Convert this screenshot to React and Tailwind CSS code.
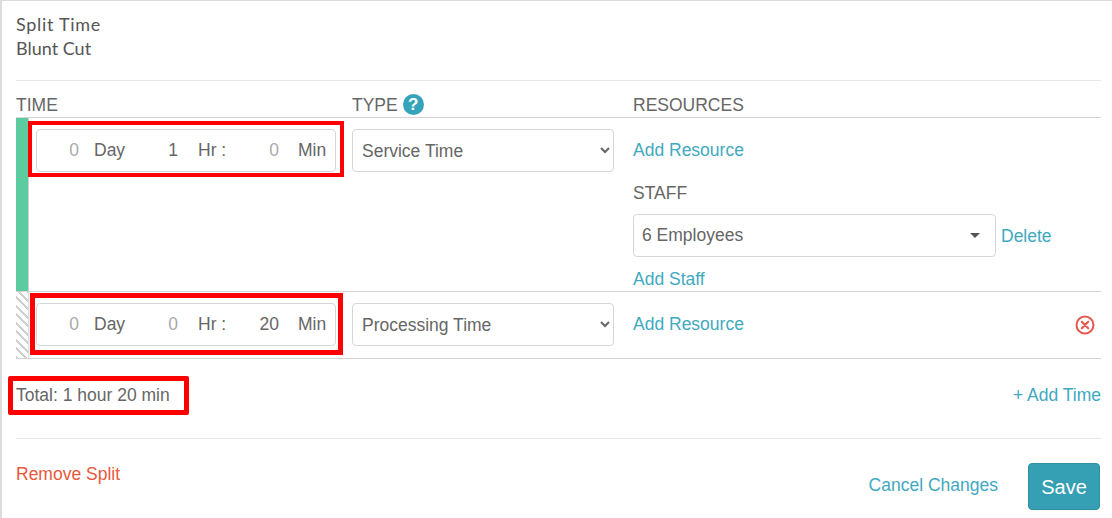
import React from 'react';

const TimeBox = ({ day, hr, min }) => (
  <div className="flex h-[43px] w-[300px] items-center rounded-[4px] border border-[#d6d6d6] bg-white text-[17.5px] text-[#666]">
    <span className="w-[42px] text-right text-[#aaa]">{day}</span>
    <span className="ml-[15px] w-[31px]">Day</span>
    <span className={`w-[53px] text-right ${hr === '0' ? 'text-[#aaa]' : ''}`}>{hr}</span>
    <span className="ml-[20px] w-[27px] whitespace-nowrap">Hr :</span>
    <span className={`w-[54px] text-right ${min === '0' ? 'text-[#aaa]' : ''}`}>{min}</span>
    <span className="ml-[19px]">Min</span>
  </div>
);

const TypeSelect = ({ value }) => (
  <select
    defaultValue={value}
    className="h-[43px] w-[262px] rounded-[4px] border border-[#d6d6d6] bg-white pl-[5px] pr-[4px] text-[17.5px] text-[#666]"
  >
    <option>Service Time</option>
    <option>Processing Time</option>
  </select>
);

const Link = ({ children, className = '' }) => (
  <a className={`text-[17.5px] text-[#3fa9bf] ${className}`}>{children}</a>
);

export default function App() {
  return (
    <div className="h-[518px] w-[1112px] overflow-hidden border-l-2 border-t border-[#dcdcdc] bg-white pl-[14px] pr-[11px] font-['Liberation_Sans',sans-serif] text-[17.5px] text-[#666]">
      {/* Heading */}
      <div className="h-[80px] border-b border-[#e6e6e6] pt-[11px] font-['Lato',sans-serif] text-[18px] leading-[24px] text-[#555]">
        <div className="tracking-[0.7px]">Split Time</div>
        <div>Blunt Cut</div>
      </div>

      {/* Column titles */}
      <div className="flex h-[37px] items-end border-b border-[#d4d4d4] pb-[2px] leading-[20px]">
        <div className="w-[336px]">TIME</div>
        <div className="flex w-[281px] items-center gap-[5px]">
          TYPE
          <span className="flex h-[21px] w-[21px] items-center justify-center rounded-full bg-[#35a3ba] text-[17px] font-bold text-white">?</span>
        </div>
        <div>RESOURCES</div>
      </div>

      {/* Service row */}
      <div className="flex h-[174px] border-b border-[#d4d4d4]">
        <div className="w-[13px] border-r border-[#cfcfcf] bg-[#5ccb9f]" />
        <div className="ml-[-1px] mt-[3px] h-[56px] w-[316px] border-4 border-[#f00] p-[4px] pb-[1px]">
          <TimeBox day="0" hr="1" min="0" />
        </div>
        <div className="ml-[8px] mt-[11px]">
          <TypeSelect value="Service Time" />
        </div>
        <div className="ml-[19px] flex flex-col">
          <Link className="mt-[22px] leading-[20px]">Add Resource</Link>
          <div className="mt-[23px] leading-[20px]">STAFF</div>
          <div className="mt-[11px] flex items-center">
            <div className="flex h-[43px] w-[363px] items-center justify-between rounded-[4px] border border-[#d6d6d6] pl-[8px] pr-[15px]">
              6 Employees
              <span className="h-0 w-0 border-x-[5px] border-t-[5px] border-x-transparent border-t-[#555]" />
            </div>
            <Link className="ml-[5px] mt-[2px]">Delete</Link>
          </div>
          <Link className="mt-[12px] leading-[20px]">Add Staff</Link>
        </div>
      </div>

      {/* Processing row */}
      <div className="flex h-[67px] border-b border-[#d4d4d4]">
        <div className="w-[13px] border-r border-[#dcdcdc] bg-[repeating-linear-gradient(45deg,#d0d0d0_0,#d0d0d0_2px,#fff_2px,#fff_6px)]" />
        <div className="ml-[1px] mt-[1px] h-[62px] w-[313px] border-[5px] border-[#f00] pl-[1px] pt-[5px]">
          <TimeBox day="0" hr="0" min="20" />
        </div>
        <div className="ml-[9px] mt-[11px]">
          <TypeSelect value="Processing Time" />
        </div>
        <div className="ml-[19px] flex flex-1 items-start justify-between pr-[6px]">
          <Link className="mt-[22px] leading-[20px]">Add Resource</Link>
          <svg className="mt-[23px]" width="20" height="20" viewBox="0 0 20 20" fill="none" stroke="#e8584f" strokeWidth="2">
            <circle cx="10" cy="10" r="8.5" />
            <path d="M6.8 6.8l6.4 6.4M13.2 6.8l-6.4 6.4" strokeLinecap="round" strokeWidth="2.2" />
          </svg>
        </div>
      </div>

      {/* Total */}
      <div className="flex h-[80px] items-start justify-between border-b border-[#e6e6e6] pt-[17px]">
        <div className="ml-[-8px] flex h-[39px] w-[181px] items-center rounded-[2px] border-[5px] border-[#f00] pl-[3px] whitespace-nowrap">
          Total: 1 hour 20 min
        </div>
        <Link className="mt-[9px] leading-[20px]">+ Add Time</Link>
      </div>

      {/* Footer */}
      <div className="flex items-start justify-between">
        <a className="mt-[25px] text-[17.5px] leading-[20px] text-[#e8583a]">Remove Split</a>
        <div className="mr-[1px] mt-[24px] flex items-start">
          <Link className="mt-[12px] leading-[20px]">Cancel Changes</Link>
          <button className="ml-[30px] h-[47px] w-[72px] rounded-[4px] border border-[#2f8fa3] bg-[#35a0b4] text-[20px] text-white">Save</button>
        </div>
      </div>
    </div>
  );
}
